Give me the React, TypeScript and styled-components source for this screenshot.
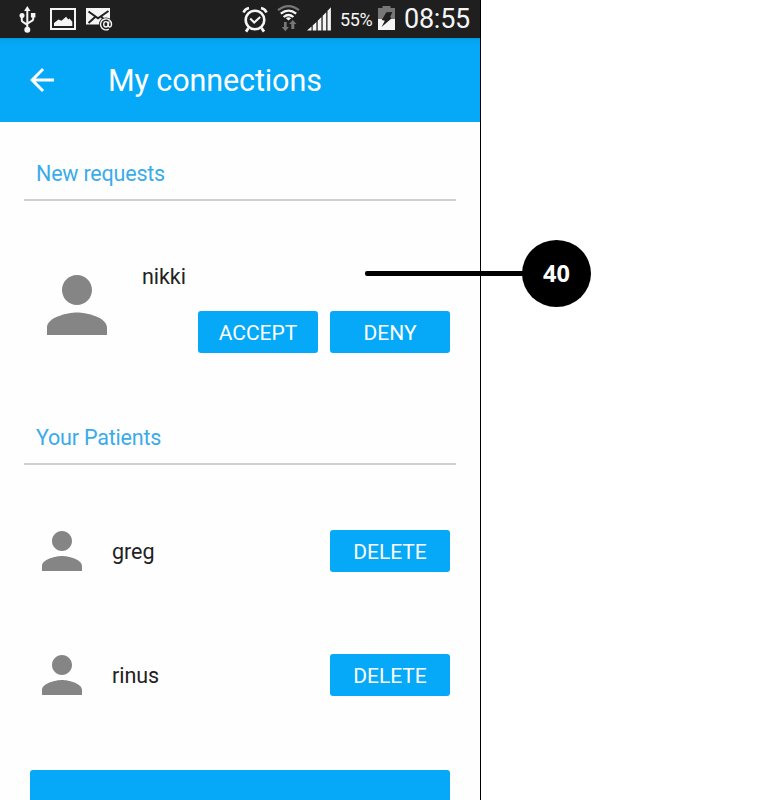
import React from "react";
import styled, { createGlobalStyle } from "styled-components";

const GlobalStyle = createGlobalStyle`
  * { box-sizing: border-box; }
  body { margin: 0; background: #fff; overflow: hidden; }
`;

const Page = styled.main`
  position: relative;
  width: 782px;
  height: 800px;
  overflow: hidden;
  background: #fff;
  font-family: Roboto, "Liberation Sans", sans-serif;
`;

const Phone = styled.div`
  width: 481px;
  height: 800px;
  border-right: 1px solid #000;
  overflow: hidden;
  background: #fefefe;
`;

const StatusBar = styled.header`
  display: flex;
  align-items: center;
  justify-content: space-between;
  height: 38px;
  padding: 0 9px 0 18px;
  background: #1f1f1f;
  color: #f5f5f5;
`;

const StatusGroup = styled.div<{ $gap: number }>`
  display: flex;
  align-items: center;
  height: 38px;
  gap: ${(p) => p.$gap}px;
`;

const Glyph = styled.svg`
  display: block;
  flex: none;
  overflow: visible;
`;

const Percent = styled.span`
  width: 30px;
  padding-top: 2px;
  font-size: 18px;
  line-height: 38px;
  letter-spacing: -0.4px;
  white-space: nowrap;
`;

const Clock = styled.span`
  width: 67px;
  font-size: 27px;
  line-height: 38px;
  letter-spacing: -0.25px;
  white-space: nowrap;
`;

const AppBar = styled.nav`
  display: flex;
  align-items: center;
  height: 84px;
  padding-left: 24px;
  gap: 48px;
  background: linear-gradient(#0699df, #05a4f1 3px, #05a9f7 8px);
  color: #fff;
`;

const Title = styled.h1`
  margin: 0;
  padding-top: 1px;
  font-size: 30.5px;
  font-weight: 400;
  line-height: 40px;
  letter-spacing: -0.1px;
`;

const Content = styled.div`
  display: flex;
  flex-direction: column;
`;

const SectionTitle = styled.h2<{ $before: number }>`
  height: 41px;
  margin: ${(p) => p.$before}px 24px 0;
  padding: 0 12px;
  border-bottom: 2px solid #d0d0d0;
  color: #3aabea;
  font-size: 21.5px;
  font-weight: 400;
  line-height: 28px;
  letter-spacing: -0.2px;
`;

const RequestRow = styled.section`
  display: flex;
  align-items: flex-start;
  gap: 20px;
  margin-top: 59px;
  padding: 0 30px 0 32px;
  height: 90px;
`;

const RequestBody = styled.div`
  display: flex;
  flex: 1;
  flex-direction: column;
  gap: 19px;
  padding-top: 2px;
`;

const PatientRow = styled.section<{ $before: number }>`
  display: flex;
  align-items: center;
  gap: 20px;
  height: 60px;
  margin-top: ${(p) => p.$before}px;
  padding: 0 30px 0 32px;
`;

const Name = styled.span`
  flex: 1;
  color: #222;
  font-size: 21.5px;
  line-height: 30px;
  letter-spacing: -0.05px;
`;

const PatientName = styled(Name)`
  padding-top: 2px;
`;

const Actions = styled.div`
  display: flex;
  justify-content: flex-end;
  gap: 12px;
`;

const Button = styled.button`
  width: 120px;
  height: 42px;
  padding: 2px 0 0;
  border: 0;
  border-radius: 3px;
  background: #05a9f7;
  color: #fff;
  font: 400 21px/40px Roboto, "Liberation Sans", sans-serif;
`;

const WideButton = styled(Button)`
  width: 420px;
  margin: 65px 0 0 30px;
`;

const Callout = styled.div`
  position: absolute;
  left: 365px;
  top: 240px;
  display: flex;
  align-items: center;
`;

const Leader = styled.div`
  width: 158px;
  height: 5px;
  border-radius: 2px 0 0 2px;
  background: #000;
`;

const Badge = styled.div`
  width: 69px;
  height: 67px;
  margin-left: -1px;
  border-radius: 50%;
  background: #000;
  color: #fff;
  font: 700 23.5px/66px "Noto Sans", "Open Sans", sans-serif;
  text-align: center;
`;

const Person = ({ size }: { size: number }) => (
  <Glyph width={size} height={size} viewBox="0 0 24 24" fill="#858585">
    <path d="M12 12c2.21 0 4-1.79 4-4s-1.79-4-4-4-4 1.79-4 4 1.79 4 4 4zm0 2c-2.67 0-8 1.34-8 4v2h16v-2c0-2.66-5.33-4-8-4z" />
  </Glyph>
);

const UsbIcon = () => (
  <Glyph width="22" height="38" viewBox="18 0 22 38" fill="#f5f5f5">
    <path d="M27.3 6l3.2 5h-6.4z" />
    <path d="M27.3 9v20M21.8 17v3.2q0 1 1 1.6l4.5 3M33.2 16v3q0 1-1 1.6l-4.9 3" fill="none" stroke="#f5f5f5" strokeWidth="2" />
    <circle cx="22" cy="15.5" r="2.5" />
    <path d="M30.9 13h4.5v4.5h-4.5z" />
    <circle cx="27.3" cy="29.7" r="3" />
  </Glyph>
);

const PictureIcon = () => (
  <Glyph width="26" height="38" viewBox="50 0 26 38">
    <path d="M51 9h24v20H51z" fill="none" stroke="#f5f5f5" strokeWidth="2" />
    <path d="M54 26v-3l4.5-3.5 3 1.3 4.6-4.1 2.2 2.8 1.2-.9 2.8 3.1V26z" fill="#f5f5f5" />
  </Glyph>
);

const MailIcon = () => (
  <Glyph width="27" height="38" viewBox="86 0 27 38">
    <path d="M86 8h24v16.5H86z" fill="#f5f5f5" />
    <path d="M88.5 11.5l9.5 6.8 10.5-7.3M88.5 23l7.2-6.4M101.5 17l5 5" fill="none" stroke="#1f1f1f" strokeWidth="2" />
    <circle cx="106" cy="24.5" r="7.1" fill="#1f1f1f" />
    <path d="M108.8 29.1a5.5 5.5 0 1 1 2.7-4.8c0 3.3-3.5 3.6-3.2.8l.5-3.5" fill="none" stroke="#f5f5f5" strokeWidth="1.4" />
    <ellipse cx="105.9" cy="24.3" rx="2.2" ry="2.7" fill="none" stroke="#f5f5f5" strokeWidth="1.4" />
  </Glyph>
);

const AlarmIcon = () => (
  <Glyph width="26" height="38" viewBox="242 0 26 38" fill="none" stroke="#f5f5f5">
    <circle cx="255" cy="20" r="9.3" strokeWidth="2.6" />
    <path d="M250.2 18.5l4 4 6-5.5" strokeWidth="2" />
    <path d="M243.5 12.5q1.5-3.7 5.5-4.5M261 8q4 .8 5.5 4.5" strokeWidth="2.6" />
    <path d="M248.5 28l-2.5 3.6M261.5 28l2.5 3.6" strokeWidth="2.8" />
  </Glyph>
);

const WifiIcon = () => (
  <Glyph width="23" height="38" viewBox="276 0 23 38" fill="none">
    <path d="M278 10.2q10.5-8.3 21 0" stroke="#777" strokeWidth="2.2" />
    <path d="M280.8 13.7q7.7-6.2 15.4 0" stroke="#f5f5f5" strokeWidth="2.3" />
    <path d="M283.6 17q4.9-4 9.8 0" stroke="#f5f5f5" strokeWidth="2.2" />
    <path d="M285.8 18.2q2.7-1.9 5.4 0l-2.7 2.3z" fill="#f5f5f5" />
    <path d="M284 22h2.7v5h2.2l-3.6 4.2-3.5-4.2h2.2zM291.3 29v-5h-2.2l3.7-4 3.7 4h-2.2v5z" fill="#777" />
  </Glyph>
);

const SignalIcon = () => (
  <Glyph width="25" height="38" viewBox="307 0 25 38" fill="#f5f5f5">
    <path d="M307 30.5l4.5-4v4zM312.7 25.4l3.7-3.4v8.5h-3.7zM317.7 20.8l3.7-3.7v13.4h-3.7zM322.7 15.8l3.5-3.6v18.3h-3.5zM327.5 10.8l3.4-3.5v23.2h-3.4z" />
  </Glyph>
);

const BatteryIcon = () => (
  <Glyph width="18" height="38" viewBox="378 0 18 38">
    <path d="M378 8h4.5V6h8v2h4.5v11.3h-17z" fill="#777" />
    <path d="M378 19h17v11h-17z" fill="#f5f5f5" />
    <path d="M386.4 12.2l6-.2-2.1 4.7 1.1 1.9-9.8 8.3 3.2-6.2-3.1-.8z" fill="#1f1f1f" />
  </Glyph>
);

const BackArrow = () => (
  <Glyph width="36" height="36" viewBox="0 0 24 24" fill="#fff">
    <path d="M20 11H7.83l5.59-5.59L12 4l-8 8 8 8 1.41-1.41L7.83 13H20v-2z" />
  </Glyph>
);

const patients = ["greg", "rinus"];

export default function App() {
  return (
    <Page>
      <GlobalStyle />
      <Phone>
        <StatusBar>
          <StatusGroup $gap={10}>
            <UsbIcon />
            <PictureIcon />
            <MailIcon />
          </StatusGroup>
          <StatusGroup $gap={8}>
            <AlarmIcon />
            <WifiIcon />
            <SignalIcon />
            <Percent>55%</Percent>
            <BatteryIcon />
            <Clock>08:55</Clock>
          </StatusGroup>
        </StatusBar>
        <AppBar>
          <BackArrow />
          <Title>My connections</Title>
        </AppBar>
        <Content>
          <SectionTitle $before={38}>New requests</SectionTitle>
          <RequestRow>
            <Person size={90} />
            <RequestBody>
              <Name>nikki</Name>
              <Actions>
                <Button>ACCEPT</Button>
                <Button>DENY</Button>
              </Actions>
            </RequestBody>
          </RequestRow>
          <SectionTitle $before={74}>Your Patients</SectionTitle>
          {patients.map((name, index) => (
            <PatientRow key={name} $before={index === 0 ? 56 : 64}>
              <Person size={60} />
              <PatientName>{name}</PatientName>
              <Button>DELETE</Button>
            </PatientRow>
          ))}
          <WideButton aria-label="Add connection" />
        </Content>
      </Phone>
      <Callout>
        <Leader />
        <Badge>40</Badge>
      </Callout>
    </Page>
  );
}
